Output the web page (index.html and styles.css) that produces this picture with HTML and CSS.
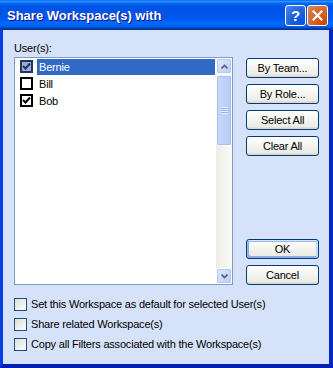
FILE: index.html
```html
<!DOCTYPE html>
<html lang="en">
<head>
    <meta charset="UTF-8">
    <title>Share Workspace(s) with</title>
    <link rel="stylesheet" href="styles.css">
</head>
<body>
    <div class="window">
        <div class="titlebar">
            <span class="title">Share Workspace(s) with</span>
            <div class="caption-buttons">
                <span class="cap-btn help">?</span>
                <span class="cap-btn close">
                    <svg width="11" height="11" viewBox="0 0 11 11"><path d="M1.5 1.5 L9.5 9.5 M9.5 1.5 L1.5 9.5" stroke="#fff" stroke-width="2.2" stroke-linecap="square"/></svg>
                </span>
            </div>
        </div>
        <div class="client">
            <div class="main">
                <div class="users">
                    <div class="label">User(s):</div>
                    <div class="listbox">
                        <ul class="items">
                            <li class="item selected">
                                <span class="lcheck checked"><svg width="9" height="9" viewBox="0 0 9 9"><path d="M1 4 L3.5 6.5 L8 1.5" fill="none" stroke="currentColor" stroke-width="2"/></svg></span>
                                <span class="name">Bernie</span>
                            </li>
                            <li class="item">
                                <span class="lcheck"></span>
                                <span class="name">Bill</span>
                            </li>
                            <li class="item">
                                <span class="lcheck checked"><svg width="9" height="9" viewBox="0 0 9 9"><path d="M1 4 L3.5 6.5 L8 1.5" fill="none" stroke="currentColor" stroke-width="2"/></svg></span>
                                <span class="name">Bob</span>
                            </li>
                        </ul>
                        <div class="scrollbar">
                            <div class="sb-btn">
                                <svg width="7" height="5" viewBox="0 0 7 5"><path d="M0.5 4.5 L3.5 1.5 L6.5 4.5" fill="none" stroke="#4d6185" stroke-width="1.6"/></svg>
                            </div>
                            <div class="sb-thumb">
                                <span class="grip"></span>
                            </div>
                            <div class="sb-track"></div>
                            <div class="sb-btn">
                                <svg width="7" height="5" viewBox="0 0 7 5"><path d="M0.5 0.5 L3.5 3.5 L6.5 0.5" fill="none" stroke="#4d6185" stroke-width="1.6"/></svg>
                            </div>
                        </div>
                    </div>
                </div>
                <div class="actions">
                    <div class="btn-group">
                        <button class="btn">By Team...</button>
                        <button class="btn">By Role...</button>
                        <button class="btn">Select All</button>
                        <button class="btn">Clear All</button>
                    </div>
                    <div class="btn-group">
                        <button class="btn default">OK</button>
                        <button class="btn">Cancel</button>
                    </div>
                </div>
            </div>
            <div class="options">
                <label class="option"><span class="xpcheck"></span>Set this Workspace as default for selected User(s)</label>
                <label class="option"><span class="xpcheck"></span>Share related Workspace(s)</label>
                <label class="option"><span class="xpcheck"></span>Copy all Filters associated with the Workspace(s)</label>
            </div>
        </div>
    </div>
</body>
</html>
```

FILE: styles.css
```css
body {
    margin: 0;
    background: #fff;
    font-family: "Liberation Sans", Arial, sans-serif;
    font-size: 11px;
    letter-spacing: -0.2px;
    color: #000;
}

.window {
    width: 333px;
    height: 368px;
    display: flex;
    flex-direction: column;
    background: #0831d9;
}

/* title bar */
.titlebar {
    height: 30px;
    flex: none;
    display: flex;
    align-items: center;
    justify-content: space-between;
    padding: 0 5px 0 7px;
    box-sizing: border-box;
    background: linear-gradient(to bottom, #0058ee 0%, #3593ff 4%, #288eff 6%, #127dff 8%, #036ffc 10%, #0262ee 14%, #0057e5 20%, #0054e3 24%, #0055eb 56%, #005bf5 66%, #026afe 76%, #0062ef 86%, #0052d6 92%, #0040ab 94%, #003092 100%);
}

.title {
    color: #fff;
    font-weight: bold;
    font-size: 13px;
    letter-spacing: 0;
    padding-top: 1px;
    text-shadow: 1px 1px #0f1089;
}

.caption-buttons {
    display: flex;
    gap: 1px;
    padding-top: 1px;
}

.cap-btn {
    width: 21px;
    height: 21px;
    box-sizing: border-box;
    border: 1px solid #fff;
    border-radius: 3px;
    display: flex;
    align-items: center;
    justify-content: center;
    color: #fff;
    font-weight: bold;
    font-size: 15px;
    letter-spacing: 0;
}

.help {
    background: radial-gradient(circle at 90% 90%, #0054e9 0%, #2263d5 55%, #4482f4 90%, #5b96f7 100%);
}

.close {
    background: radial-gradient(circle at 90% 90%, #cc4600 0%, #dc6527 55%, #cd7546 70%, #e38a5c 100%);
}

/* client area */
.client {
    flex: 1;
    background: #d6e2f9;
    border-left: 3px solid #0a3ee0;
    border-right: 4px solid #0826c4;
    border-bottom: 4px solid #0420b4;
    padding: 12px 10px 0 11px;
    display: flex;
    flex-direction: column;
}

.main {
    display: flex;
    gap: 13px;
}

.users {
    width: 219px;
}

.label {
    line-height: 13px;
    margin-bottom: 2px;
}

.listbox {
    height: 228px;
    box-sizing: border-box;
    border: 1px solid #7f9db9;
    background: #fff;
    display: flex;
}

.items {
    flex: 1;
    list-style: none;
    margin: 0;
    padding: 0;
}

.item {
    height: 17px;
    display: flex;
    align-items: center;
    padding-left: 5px;
}

.lcheck {
    width: 13px;
    height: 13px;
    box-sizing: border-box;
    border: 2px solid #000;
    background: #fff;
    color: #000;
    display: flex;
    align-items: center;
    justify-content: center;
    margin-right: 4px;
}

.name {
    flex: 1;
    height: 16px;
    line-height: 16px;
    padding-left: 2px;
    margin-right: 1px;
    margin-top: 1px;
}

.selected .name {
    background: #316ac5;
    color: #fff;
}

.selected .lcheck {
    border-color: #1f3565;
    background: #9aaed8;
    color: #1f3565;
}

/* scrollbar */
.scrollbar {
    width: 16px;
    display: flex;
    flex-direction: column;
    background: linear-gradient(to right, #eeede5, #fbfbf8);
}

.sb-btn {
    height: 16px;
    box-sizing: border-box;
    border: 1px solid #fff;
    border-radius: 2px;
    background: linear-gradient(135deg, #e0e9fc, #b8cdf8);
    box-shadow: inset 0 0 0 1px #b4c8f6;
    display: flex;
    align-items: center;
    justify-content: center;
}

.sb-thumb {
    height: 71px;
    margin-top: 1px;
    box-sizing: border-box;
    border: 1px solid #fff;
    border-radius: 2px;
    background: linear-gradient(to right, #c9d8fc, #b6cbf8);
    box-shadow: inset 0 0 0 1px #a6bdf0;
    display: flex;
    align-items: center;
    justify-content: center;
}

.grip {
    width: 7px;
    height: 7px;
    background: repeating-linear-gradient(to bottom, #eef4fe 0, #eef4fe 1px, #8cb0f8 1px, #8cb0f8 2px);
}

.sb-track {
    flex: 1;
}

/* buttons */
.actions {
    width: 73px;
    padding-top: 16px;
    display: flex;
    flex-direction: column;
    justify-content: space-between;
}

.btn-group {
    display: flex;
    flex-direction: column;
    gap: 6px;
}

.btn {
    height: 20px;
    padding: 0;
    border: 1px solid #003c74;
    border-radius: 3px;
    background: linear-gradient(to bottom, #ffffff 0%, #f4f4f0 50%, #ecebe6 86%, #d6d0c5 100%);
    font-family: "Liberation Sans", Arial, sans-serif;
    font-size: 11px;
    letter-spacing: -0.2px;
    color: #000;
}

.btn.default {
    box-shadow: inset -1px 1px #cee7ff, inset 1px 2px #98b8ea, inset -2px 2px #bcd4f6, inset 1px -1px #89ade4, inset 2px -2px #89ade4;
}

/* options */
.options {
    padding-top: 9px;
    display: flex;
    flex-direction: column;
}

.option {
    height: 20px;
    display: flex;
    align-items: center;
}

.xpcheck {
    width: 13px;
    height: 13px;
    box-sizing: border-box;
    border: 1px solid #1c5180;
    background: linear-gradient(135deg, #dcdcd7, #ffffff);
    margin-right: 4px;
}
```
